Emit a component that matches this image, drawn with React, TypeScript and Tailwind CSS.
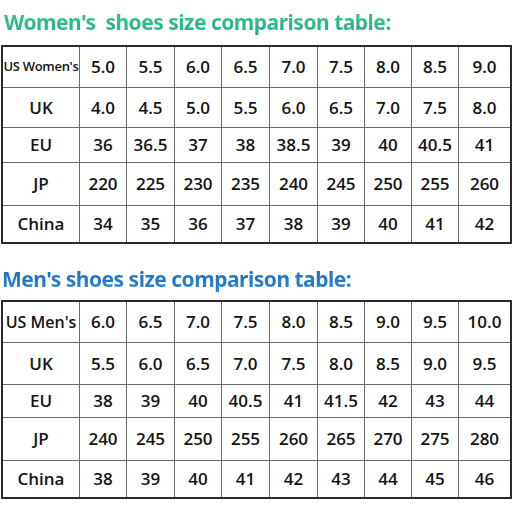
import React from 'react';

type SizeTable = {
  title: string;
  titleClass: string;
  rows: string[][];
  rowHeights: string[];
  headClass: string;
};

const cols =
  'grid-cols-[76px_46px_47px_46px_47px_47px_46px_46px_46px_51px]';

const SizeGrid: React.FC<{ rows: string[][]; rowHeights: string[]; headClass: string }> = ({
  rows,
  rowHeights,
  headClass,
}) => (
  <div className="ml-[1px] w-[511px] border-2 border-[#2a2a2a] bg-[#6b6b6b]">
    <div className={`grid ${cols} gap-px`}>
      {rows.map((row, r) =>
        row.map((cell, c) => (
          <div
            key={`${r}-${c}`}
            className={`flex items-center justify-center bg-white text-[#141414] ${rowHeights[r]} ${
              r === 0 && c === 0 ? headClass : 'text-[17px] font-semibold'
            }`}
          >
            {cell}
          </div>
        ))
      )}
    </div>
  </div>
);

const App: React.FC = () => {
  const women: SizeTable = {
    title: "Women's\u00a0 shoes size comparison table:",
    titleClass: 'bg-gradient-to-b from-[#3fcf68] to-[#26a3a0]',
    rows: [
      ["US Women's", '5.0', '5.5', '6.0', '6.5', '7.0', '7.5', '8.0', '8.5', '9.0'],
      ['UK', '4.0', '4.5', '5.0', '5.5', '6.0', '6.5', '7.0', '7.5', '8.0'],
      ['EU', '36', '36.5', '37', '38', '38.5', '39', '40', '40.5', '41'],
      ['JP', '220', '225', '230', '235', '240', '245', '250', '255', '260'],
      ['China', '34', '35', '36', '37', '38', '39', '40', '41', '42'],
    ],
    rowHeights: ['h-[40px]', 'h-[39px]', 'h-[34px]', 'h-[42px]', 'h-[36px]'],
    headClass: 'text-[13px] font-semibold tracking-[-0.3px]',
  };

  const men: SizeTable = {
    title: "Men's shoes size comparison table:",
    titleClass: 'bg-gradient-to-b from-[#1a66bb] to-[#2f8ad2]',
    rows: [
      ["US Men's", '6.0', '6.5', '7.0', '7.5', '8.0', '8.5', '9.0', '9.5', '10.0'],
      ['UK', '5.5', '6.0', '6.5', '7.0', '7.5', '8.0', '8.5', '9.0', '9.5'],
      ['EU', '38', '39', '40', '40.5', '41', '41.5', '42', '43', '44'],
      ['JP', '240', '245', '250', '255', '260', '265', '270', '275', '280'],
      ['China', '38', '39', '40', '41', '42', '43', '44', '45', '46'],
    ],
    rowHeights: ['h-[40px]', 'h-[41px]', 'h-[32px]', 'h-[42px]', 'h-[36px]'],
    headClass: 'text-[16px] font-semibold',
  };

  return (
    <div
      className="flex h-[512px] w-[512px] flex-col overflow-hidden bg-white"
      style={{ fontFamily: '"Open Sans", "Noto Sans", sans-serif' }}
    >
      <div className="flex h-[45px] items-start pl-[4px] pt-[7px]">
        <h1
          className={`${women.titleClass} bg-clip-text text-[21px] font-bold leading-[30px] tracking-[-0.5px] text-transparent`}
          style={{ fontFamily: '"Noto Sans", sans-serif' }}
        >
          {women.title}
        </h1>
      </div>
      <SizeGrid rows={women.rows} rowHeights={women.rowHeights} headClass={women.headClass} />
      <div className="flex h-[56px] items-start pl-[2px] pt-[20px]">
        <h2
          className={`${men.titleClass} bg-clip-text text-[21px] font-bold leading-[30px] tracking-[-0.5px] text-transparent`}
          style={{ fontFamily: '"Noto Sans", sans-serif' }}
        >
          {men.title}
        </h2>
      </div>
      <SizeGrid rows={men.rows} rowHeights={men.rowHeights} headClass={men.headClass} />
    </div>
  );
};

export default App;
